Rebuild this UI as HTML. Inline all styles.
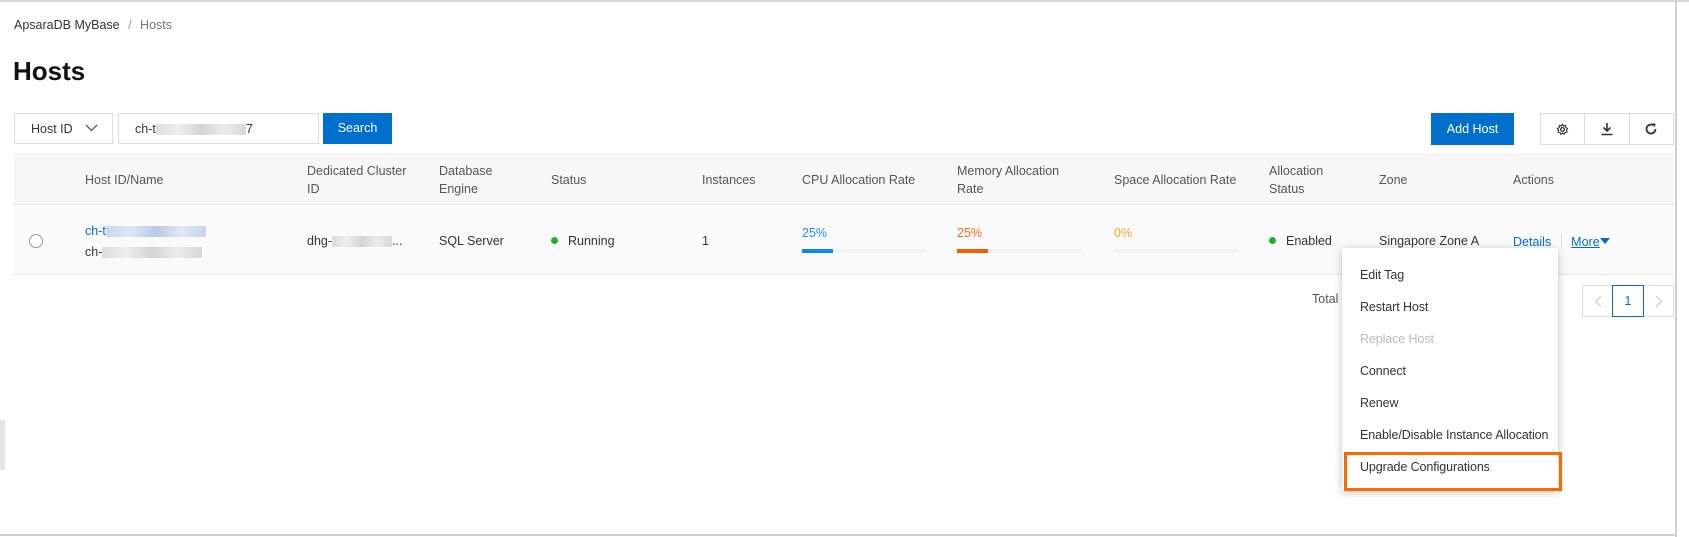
<!DOCTYPE html>
<html><head><meta charset="utf-8"><style>
*{box-sizing:border-box;margin:0;padding:0}
body{width:1689px;height:537px;background:#fff;font-family:"Liberation Sans",sans-serif;font-size:12.5px;color:#333;position:relative;overflow:hidden}
.a{position:absolute;white-space:nowrap}
.blur{display:inline-block;height:11px;background:linear-gradient(90deg,#c9d7f0,#dfe6f3,#b8c9ea,#e3e8f1,#c7d4ee);vertical-align:middle}
.g{background:linear-gradient(90deg,#ddd,#eee,#d4d4d4,#ececec,#d8d8d8)}
.bar{position:absolute;height:4px;background:#f2f2f2;width:124px}
.bar i{display:block;height:4px;width:31px}
.dot{display:inline-block;width:7px;height:7px;border-radius:50%;background:#1db32a;margin-right:10px;vertical-align:1px}
.mi{position:absolute;left:18px;letter-spacing:-0.1px}
</style></head><body>
<div class="a" style="left:0;top:0;width:1689px;height:2px;background:#d9d9d9"></div>
<div class="a" style="left:1675px;top:0;width:2px;height:537px;background:#cfcfcf"></div>
<div class="a" style="left:0;top:534px;width:1677px;height:2px;background:#cfcfcf"></div>
<div class="a" style="left:0;top:420px;width:5px;height:50px;background:#e4e4e4"></div>

<div class="a" style="left:14px;top:18px;font-size:12.5px;color:#333">ApsaraDB MyBase <span style="color:#999;margin:0 5px">/</span> <span style="color:#777">Hosts</span></div>
<div class="a" style="left:13px;top:56px;font-size:26px;font-weight:bold;color:#111">Hosts</div>

<div class="a" style="left:14px;top:113px;width:99px;height:31px;border:1px solid #ddd;padding:8px 16px;color:#333">Host ID<svg style="position:absolute;right:14px;top:10px" width="13" height="8"><path d="M1 1l5.5 5.5L12 1" stroke="#555" fill="none" stroke-width="1.3"/></svg></div>
<div class="a" style="left:118px;top:113px;width:201px;height:31px;border:1px solid #ddd;padding:8px 16px">ch-t<span class="blur g" style="width:90px"></span>7</div>
<div class="a" style="left:323px;top:113px;width:69px;height:31px;background:#0070cc;color:#fff;text-align:center;line-height:31px">Search</div>

<div class="a" style="left:1431px;top:113px;width:83px;height:32px;background:#0070cc;color:#fff;text-align:center;line-height:32px">Add Host</div>
<div class="a" style="left:1540px;top:113px;width:134px;height:32px;border:1px solid #ddd;display:flex">
<div style="flex:1;border-right:1px solid #ddd;display:flex;align-items:center;justify-content:center"><svg width="13" height="13" viewBox="0 0 14 14"><circle cx="7" cy="7" r="2" fill="none" stroke="#333" stroke-width="1.4"/><path d="M7 1.5l1.2 1.6 2-.3.4 2 1.7 1.2-1 1.8.5 1.9-2 .5-1 1.7-1.8-.9-1.8.9-1-1.7-2-.5.5-1.9-1-1.8L3.4 4.8l.4-2 2 .3z" fill="none" stroke="#333" stroke-width="1.3"/></svg></div>
<div style="flex:1;border-right:1px solid #ddd;display:flex;align-items:center;justify-content:center"><svg width="14" height="14"><path d="M7 1v8M3.5 5.5L7 9l3.5-3.5M1.5 12.5h11" stroke="#333" fill="none" stroke-width="1.6"/></svg></div>
<div style="flex:1;display:flex;align-items:center;justify-content:center"><svg width="14" height="14"><path d="M11.5 7A4.5 4.5 0 1 1 9.5 3.3" stroke="#333" fill="none" stroke-width="1.8"/><path d="M8 1.2l3.6.6-.9 3.6z" fill="#333"/></svg></div>
</div>

<div class="a" style="left:14px;top:153px;width:1660px;height:52px;background:#f7f7f7;border-bottom:1px solid #e6e6e6"></div>
<div class="a" style="left:14px;top:205px;width:1660px;height:70px;background:#fafafa;border-bottom:1px solid #e6e6e6"></div>

<div style="color:#555;line-height:18px">
<div class="a" style="left:85px;top:171px">Host ID/Name</div>
<div class="a" style="left:307px;top:162px">Dedicated Cluster<br>ID</div>
<div class="a" style="left:439px;top:162px">Database<br>Engine</div>
<div class="a" style="left:551px;top:171px">Status</div>
<div class="a" style="left:702px;top:171px">Instances</div>
<div class="a" style="left:802px;top:171px">CPU Allocation Rate</div>
<div class="a" style="left:957px;top:162px">Memory Allocation<br>Rate</div>
<div class="a" style="left:1114px;top:171px">Space Allocation Rate</div>
<div class="a" style="left:1269px;top:162px">Allocation<br>Status</div>
<div class="a" style="left:1379px;top:171px">Zone</div>
<div class="a" style="left:1513px;top:171px">Actions</div>
</div>

<div class="a" style="left:29px;top:234px;width:14px;height:14px;border:1px solid #999;border-radius:50%;background:#fff"></div>
<div class="a" style="left:85px;top:224px;color:#0070cc">ch-t<span class="blur" style="width:100px"></span></div>
<div class="a" style="left:85px;top:245px">ch-<span class="blur g" style="width:100px"></span></div>
<div class="a" style="left:307px;top:234px">dhg-<span class="blur g" style="width:60px"></span>...</div>
<div class="a" style="left:439px;top:234px">SQL Server</div>
<div class="a" style="left:551px;top:234px"><span class="dot"></span>Running</div>
<div class="a" style="left:702px;top:234px">1</div>
<div class="a" style="left:802px;top:226px;color:#1e90ff">25%</div>
<div class="bar" style="left:802px;top:249px"><i style="background:#0a8cf0"></i></div>
<div class="a" style="left:957px;top:226px;color:#f56a1a">25%</div>
<div class="bar" style="left:957px;top:249px"><i style="background:#f06000"></i></div>
<div class="a" style="left:1114px;top:226px;color:#f5a623">0%</div>
<div class="bar" style="left:1114px;top:249px"></div>
<div class="a" style="left:1269px;top:234px"><span class="dot"></span>Enabled</div>
<div class="a" style="left:1379px;top:234px">Singapore Zone A</div>
<div class="a" style="left:1513px;top:234px;color:#0070cc">Details <span style="display:inline-block;width:1px;height:14px;background:#ddd;margin:0 6px;vertical-align:-2px"></span> <span style="text-decoration:underline">More</span><svg width="10" height="7" style="vertical-align:1px"><path d="M0 0h10L5 6z" fill="#0070cc"/></svg></div>

<div class="a" style="left:1312px;top:292px;color:#555">Total I</div>
<div class="a" style="left:1582px;top:285px;width:92px;height:32px;border:1px solid #ddd;display:flex">
<div style="flex:1;display:flex;align-items:center;justify-content:center"><svg width="8" height="13"><path d="M7 1L1.5 6.5 7 12" stroke="#ccc" fill="none" stroke-width="1.2"/></svg></div>
<div style="width:32px;border:1px solid #0070cc;margin:-1px 0;text-align:center;line-height:30px;color:#0070cc">1</div>
<div style="flex:1;display:flex;align-items:center;justify-content:center"><svg width="8" height="13"><path d="M1 1l5.5 5.5L1 12" stroke="#ccc" fill="none" stroke-width="1.2"/></svg></div>
</div>

<div class="a" style="left:1342px;top:248px;width:216px;height:242px;background:#fff;box-shadow:0 2px 8px rgba(0,0,0,.25)">
<div class="mi" style="top:20px">Edit Tag</div>
<div class="mi" style="top:52px">Restart Host</div>
<div class="mi" style="top:84px;color:#bbb">Replace Host</div>
<div class="mi" style="top:116px">Connect</div>
<div class="mi" style="top:148px">Renew</div>
<div class="mi" style="top:180px">Enable/Disable Instance Allocation</div>
<div class="mi" style="top:212px">Upgrade Configurations</div>
</div>
<div class="a" style="left:1344px;top:452px;width:218px;height:39px;border:3px solid #ff6a00"></div>
</body></html>
